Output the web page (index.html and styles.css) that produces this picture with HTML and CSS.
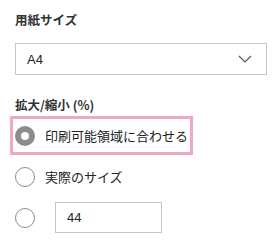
FILE: index.html
```html
<!doctype html>
<html>
<head>
    <meta charset="utf-8">
    <title>印刷設定</title>
    <link rel="stylesheet" href="styles.css">
</head>
<body>
    <div class="panel">
        <div class="label">用紙サイズ</div>
        <div class="select">
            <span>A4</span>
            <svg class="chevron" width="14" height="8" viewBox="0 0 14 8">
                <path d="M1 1 L7 7 L13 1" fill="none" stroke="#555" stroke-width="1.2"/>
            </svg>
        </div>

        <div class="label scale">拡大/縮小 (%)</div>
        <div class="radios">
            <div class="radio focused">
                <span class="dot checked"></span>
                <span>印刷可能領域に合わせる</span>
            </div>
            <div class="radio">
                <span class="dot"></span>
                <span>実際のサイズ</span>
            </div>
            <div class="radio">
                <span class="dot"></span>
                <span class="num">44</span>
            </div>
        </div>
    </div>
</body>
</html>
```

FILE: styles.css
```css
body {
    margin: 0;
    padding: 0;
    background-color: #fff;
    font-family: "Noto Sans CJK JP", "Noto Sans", sans-serif;
    color: #222;
}
.panel {
    padding: 10px 10px 0 15px;
}
.label {
    font-size: 12.5px;
    font-weight: bold;
    line-height: 20px;
    height: 20px;
    color: #333;
}
.select {
    margin-top: 13px;
    width: 252px;
    height: 32px;
    box-sizing: border-box;
    border: 1px solid #c6c6c6;
    display: flex;
    align-items: center;
    justify-content: space-between;
    padding: 0 14px 0 11px;
    font-family: "Liberation Sans", Arial, sans-serif;
    font-size: 13px;
}
.chevron {
    display: block;
}
.scale {
    margin-top: 20px;
}
.radios {
    margin-top: 1px;
    margin-left: -5px;
    display: flex;
    flex-direction: column;
    gap: 2px;
}
.radio {
    display: flex;
    align-items: center;
    align-self: flex-start;
    height: 39px;
    box-sizing: border-box;
    border: 3px solid transparent;
    padding: 0 2px;
    font-size: 13px;
}
.radio.focused {
    border-color: #f0a8c8;
}
.dot {
    width: 20px;
    height: 20px;
    box-sizing: border-box;
    border: 1px solid #8c8c8c;
    border-radius: 50%;
    margin-right: 10px;
    flex-shrink: 0;
}
.dot.checked {
    border: 6px solid #8c8c8c;
}
.num {
    margin-left: 10px;
    width: 107px;
    height: 31px;
    box-sizing: border-box;
    border: 1px solid #c6c6c6;
    padding-left: 11px;
    display: flex;
    align-items: center;
    font-family: "Liberation Sans", Arial, sans-serif;
}
```
